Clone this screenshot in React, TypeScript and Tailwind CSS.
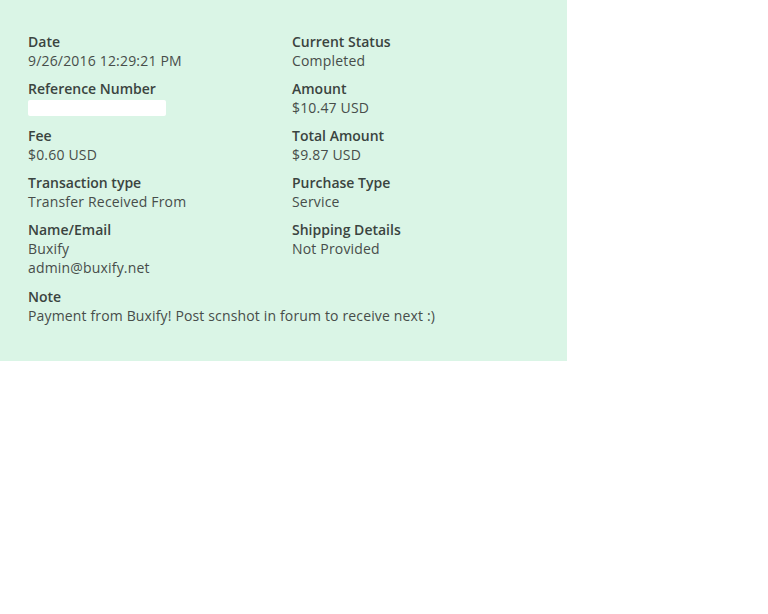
const rows: { label: string; lines: string[]; redacted?: boolean }[][] = [
  [
    { label: 'Date', lines: ['9/26/2016 12:29:21 PM'] },
    { label: 'Current Status', lines: ['Completed'] },
  ],
  [
    { label: 'Reference Number', lines: [], redacted: true },
    { label: 'Amount', lines: ['$10.47 USD'] },
  ],
  [
    { label: 'Fee', lines: ['$0.60 USD'] },
    { label: 'Total Amount', lines: ['$9.87 USD'] },
  ],
  [
    { label: 'Transaction type', lines: ['Transfer Received From'] },
    { label: 'Purchase Type', lines: ['Service'] },
  ],
  [
    { label: 'Name/Email', lines: ['Buxify', 'admin@buxify.net'] },
    { label: 'Shipping Details', lines: ['Not Provided'] },
  ],
]

function Field({ label, lines, redacted }: { label: string; lines: string[]; redacted?: boolean }) {
  return (
    <div>
      <div className="font-semibold text-[#3a4440]">{label}</div>
      {redacted && (
        <div className="flex h-[19px] items-center">
          <span className="block h-[16px] w-[138px] rounded-[2px] bg-white" />
        </div>
      )}
      {lines.map((line) => (
        <div key={line} className="tracking-[0.18px] text-[#474d4a]">{line}</div>
      ))}
    </div>
  )
}

export default function App() {
  return (
    <div className="min-h-[614px] bg-white font-['Open_Sans',sans-serif] text-[14px] leading-[19px]">
      <div className="w-[567px] bg-[#daf5e6] pb-[36px] pl-[28px] pt-[32px]">
        <div className="flex flex-col gap-[9px]">
          {rows.map((row) => (
            <div key={row[0].label} className="grid grid-cols-[264px_1fr]">
              {row.map((f) => (
                <Field key={f.label} {...f} />
              ))}
            </div>
          ))}
          <div className="mt-px">
            <div className="font-semibold text-[#3a4440]">Note</div>
            <div className="tracking-[0.15px] text-[#474d4a]">Payment from Buxify! Post scnshot in forum to receive next :)</div>
          </div>
        </div>
      </div>
    </div>
  )
}
